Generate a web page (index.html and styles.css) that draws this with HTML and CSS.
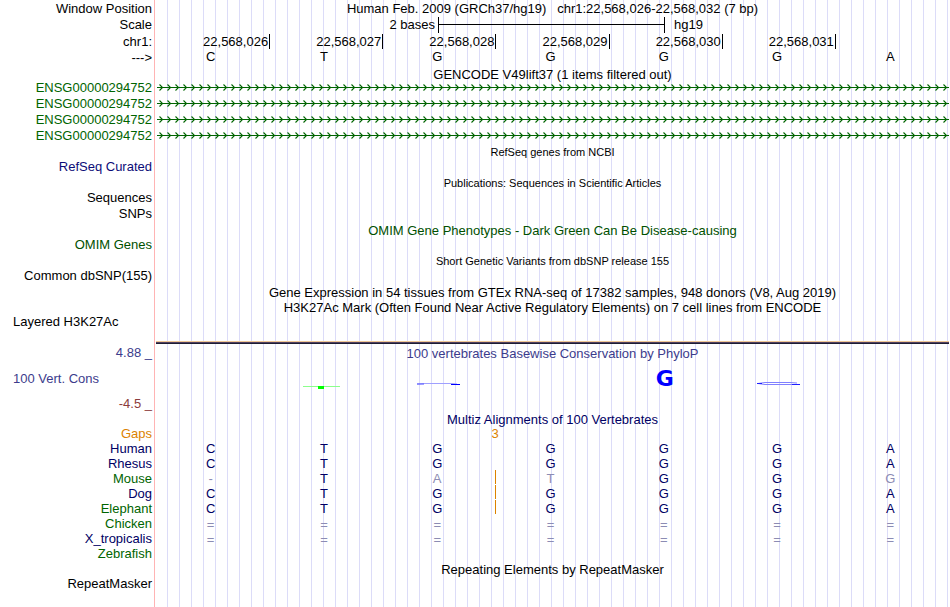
FILE: index.html
```html
<!DOCTYPE html>
<html lang="en">
<head>
    <meta charset="UTF-8">
    <meta name="viewport" content="width=device-width, initial-scale=1.0">
    <title>Human chr1:22,568,026-22,568,032</title>
    <link rel="stylesheet" href="styles.css">
</head>
<body>
    <div class="browser">
        <!-- Shared pattern for the intron arrows -->
        <svg class="defs" width="0" height="0" aria-hidden="true">
            <defs>
                <pattern id="arrows" width="8" height="16" patternUnits="userSpaceOnUse">
                    <path d="M0 7.5H8" stroke="#006400" fill="none"/>
                    <path d="M2.5 4.5L5.5 7.5L2.5 10.5" stroke="#006400" stroke-width="1.1" fill="none"/>
                </pattern>
            </defs>
        </svg>

        <!-- Position, scale and ruler -->
        <div class="row h17">
            <div class="label">Window Position</div>
            <div class="title">Human Feb. 2009 (GRCh37/hg19) &nbsp; chr1:22,568,026-22,568,032 (7 bp)</div>
        </div>
        <div class="row">
            <div class="label">Scale</div>
            <div class="scale">
                <span class="scale-size">2 bases</span>
                <span class="scale-bar"></span>
                <span class="scale-db">hg19</span>
            </div>
        </div>
        <div class="row h17">
            <div class="label">chr1:</div>
            <div class="ruler">
                <span>22,568,026</span>
                <span>22,568,027</span>
                <span>22,568,028</span>
                <span>22,568,029</span>
                <span>22,568,030</span>
                <span>22,568,031</span>
            </div>
        </div>
        <div class="row">
            <div class="label">---&gt;</div>
            <div class="bases">
                <span>C</span><span>T</span><span>G</span><span>G</span><span>G</span><span>G</span><span>A</span>
            </div>
        </div>

        <!-- GENCODE -->
        <div class="row h14"><div class="title tall">GENCODE V49lift37 (1 items filtered out)</div></div>
        <div class="row green">
            <div class="label">ENSG00000294752</div>
            <div class="gene"><svg width="100%" height="16"><rect width="100%" height="16" fill="url(#arrows)"/></svg></div>
        </div>
        <div class="row green">
            <div class="label">ENSG00000294752</div>
            <div class="gene"><svg width="100%" height="16"><rect width="100%" height="16" fill="url(#arrows)"/></svg></div>
        </div>
        <div class="row green">
            <div class="label">ENSG00000294752</div>
            <div class="gene"><svg width="100%" height="16"><rect width="100%" height="16" fill="url(#arrows)"/></svg></div>
        </div>
        <div class="row green">
            <div class="label">ENSG00000294752</div>
            <div class="gene"><svg width="100%" height="16"><rect width="100%" height="16" fill="url(#arrows)"/></svg></div>
        </div>

        <!-- Collapsed tracks -->
        <div class="row"><div class="title small">RefSeq genes from NCBI</div></div>
        <div class="row h15 refseq"><div class="label">RefSeq Curated</div></div>
        <div class="row"><div class="title small">Publications: Sequences in Scientific Articles</div></div>
        <div class="row h15"><div class="label">Sequences</div></div>
        <div class="row"><div class="label">SNPs</div></div>
        <div class="row omim"><div class="title tall">OMIM Gene Phenotypes - Dark Green Can Be Disease-causing</div></div>
        <div class="row h15 omim"><div class="label">OMIM Genes</div></div>
        <div class="row"><div class="title small">Short Genetic Variants from dbSNP release 155</div></div>
        <div class="row h15"><div class="label">Common dbSNP(155)</div></div>
        <div class="row"><div class="title tall">Gene Expression in 54 tissues from GTEx RNA-seq of 17382 samples, 948 donors (V8, Aug 2019)</div></div>
        <div class="row h15"><div class="title">H3K27Ac Mark (Often Found Near Active Regulatory Elements) on 7 cell lines from ENCODE</div></div>
        <div class="row h15"><div class="label label-left">Layered H3K27Ac</div></div>
        <div class="signal"></div>

        <!-- Conservation -->
        <div class="cons">
            <div class="cons-labels">
                <span class="label">4.88 _</span>
                <span class="label label-left">100 Vert. Cons</span>
                <span class="label low">-4.5 _</span>
            </div>
            <div class="cons-track">
                <div class="title">100 vertebrates Basewise Conservation by PhyloP</div>
                <div class="logo">
                    <span></span>
                    <span>
                        <svg width="44" height="8" viewBox="0 0 44 8">
                            <path d="M0 4.5H37" stroke="#8cff8c"/>
                            <path d="M15 4H21V7H15Z" fill="#00ff00"/>
                        </svg>
                    </span>
                    <span>
                        <svg width="44" height="8" viewBox="0 0 44 8">
                            <path d="M1 2L8 1.5H36L41 2" stroke="#a0a0ff" fill="none"/>
                            <path d="M1 2H8" stroke="#5050ff"/>
                            <path d="M35 2.5H44" stroke="#0000ff"/>
                        </svg>
                    </span>
                    <span></span>
                    <span class="logo-base">G</span>
                    <span>
                        <svg width="44" height="8" viewBox="0 0 44 8">
                            <path d="M41 1L34 .5H9L2 1.5L9 2.5H36" stroke="#8080ff" fill="none"/>
                            <path d="M1 1.5H6M36 2.5H44" stroke="#2020ff"/>
                        </svg>
                    </span>
                    <span></span>
                </div>
            </div>
        </div>

        <!-- Multiz alignment -->
        <div class="row h15 navy"><div class="title">Multiz Alignments of 100 Vertebrates</div></div>
        <table class="align">
            <colgroup>
                <col class="col-label"><col><col><col><col><col><col><col><col class="col-end">
            </colgroup>
            <tbody>
                <tr class="gaps"><th>Gaps</th><td></td><td></td><td><span class="gap-count">3</span></td><td></td><td></td><td></td><td></td><td></td></tr>
                <tr><th>Human</th><td>C</td><td>T</td><td>G</td><td>G</td><td>G</td><td>G</td><td>A</td><td></td></tr>
                <tr><th>Rhesus</th><td>C</td><td>T</td><td>G</td><td>G</td><td>G</td><td>G</td><td>A</td><td></td></tr>
                <tr><th class="green">Mouse</th><td class="diff">-</td><td>T</td><td class="diff gap">A</td><td class="diff">T</td><td>G</td><td>G</td><td class="diff">G</td><td></td></tr>
                <tr><th>Dog</th><td>C</td><td>T</td><td class="gap">G</td><td>G</td><td>G</td><td>G</td><td>A</td><td></td></tr>
                <tr><th class="green">Elephant</th><td>C</td><td>T</td><td class="gap">G</td><td>G</td><td>G</td><td>G</td><td>A</td><td></td></tr>
                <tr class="unaligned"><th class="green">Chicken</th><td>=</td><td>=</td><td>=</td><td>=</td><td>=</td><td>=</td><td>=</td><td></td></tr>
                <tr class="unaligned"><th>X_tropicalis</th><td>=</td><td>=</td><td>=</td><td>=</td><td>=</td><td>=</td><td>=</td><td></td></tr>
                <tr><th class="green">Zebrafish</th><td></td><td></td><td></td><td></td><td></td><td></td><td></td><td></td></tr>
            </tbody>
        </table>

        <!-- RepeatMasker -->
        <div class="row h15"><div class="title">Repeating Elements by RepeatMasker</div></div>
        <div class="row h15"><div class="label">RepeatMasker</div></div>
    </div>
</body>
</html>
```
FILE: styles.css
```css
* {
    box-sizing: border-box;
}

body {
    margin: 0;
    background: #ffffff;
    color: #000000;
    font-family: "Liberation Sans", Arial, Helvetica, sans-serif;
    font-size: 13px;
    line-height: 15px;
}

/* Red line beside the labels, blue guide lines every 12px after it */
.browser {
    min-height: 100vh;
    padding-right: 1px;
    background-image:
        linear-gradient(#ffb4b4, #ffb4b4),
        linear-gradient(#ffffff, #ffffff),
        linear-gradient(to right, #dcdcf8 1px, transparent 1px);
    background-position: 154px 0, 0 0, 11px 0;
    background-size: 1px 100%, 160px 100%, 12px 100%;
    background-repeat: no-repeat, no-repeat, repeat;
}

.defs {
    position: absolute;
}

.row {
    display: grid;
    grid-template-columns: 154px 1fr;
    height: 16px;
    line-height: 16px;
    white-space: nowrap;
}

.h14 {
    height: 14px;
    line-height: 14px;
}

.h15 {
    height: 15px;
    line-height: 15px;
}

.h17 {
    height: 17px;
    line-height: 17px;
}

.label {
    padding-right: 2px;
    text-align: right;
}

.h15 .label {
    line-height: 13px;
}

.label-left {
    padding-left: 13px;
    text-align: left;
}

.title {
    grid-column: 2;
    padding-left: 2px;
    text-align: center;
}

.tall {
    line-height: 17px;
}

.small {
    font-size: 11px;
}

/* Track colours */
.green {
    color: #006400;
}

.navy {
    color: #000064;
}

.refseq {
    color: #0c0c78;
}

.omim {
    color: #005000;
}

/* Scale bar covers two bases of the seven */
.scale {
    display: grid;
    grid-template-columns: 5fr 4fr 5fr;
}

.scale-size {
    padding-right: 3px;
    text-align: right;
}

.scale-bar {
    border: solid #000000;
    border-width: 0 1px;
    background: linear-gradient(#000000, #000000) 0 7px / 100% 1px no-repeat;
}

.scale-db {
    padding-left: 9px;
}

.ruler,
.bases,
.logo {
    display: grid;
    grid-template-columns: repeat(7, 1fr);
}

.ruler {
    padding: 1px 0 1px 3px;
    line-height: 15px;
}

.ruler span {
    padding-right: 1px;
    border-right: 1px solid #000000;
    text-align: right;
}

.bases {
    padding-right: 2px;
    line-height: 14px;
    text-align: center;
}

.gene {
    padding-left: 3px;
}

.gene svg {
    display: block;
}

.signal {
    height: 3px;
    margin: 11px 0 2px 156px;
    border-top: 1px solid #f0c896;
    background: linear-gradient(#504060 1px, #1e1e32 1px);
}

/* Conservation */
.cons {
    display: grid;
    grid-template-columns: 154px 1fr;
    height: 66px;
    color: #3c3c8c;
}

.cons-labels {
    display: flex;
    flex-direction: column;
    justify-content: space-between;
    padding-bottom: 2px;
}

.cons-labels .label {
    line-height: 13px;
}

.low {
    color: #8c3c3c;
}

.logo {
    padding: 0 1px;
    height: 40px;
    align-items: center;
    text-align: center;
}

.logo svg {
    display: block;
    margin: 10px auto 0;
}

.logo-base {
    height: 26px;
    color: #0000ff;
    font-family: "DejaVu Sans", sans-serif;
    font-size: 22px;
    font-weight: bold;
    line-height: 22px;
}

/* Alignment */
.align {
    width: 100%;
    border-collapse: collapse;
    table-layout: fixed;
    color: #000064;
    line-height: 13px;
}

.align th,
.align td {
    position: relative;
    height: 15px;
    padding: 0;
    text-align: center;
    vertical-align: top;
}

.align th {
    padding-right: 2px;
    font-weight: normal;
    text-align: right;
}

.align th.green {
    color: #006400;
}

.col-label {
    width: 154px;
}

.col-end {
    width: 2px;
}

.align .diff,
.align .unaligned td {
    color: #8c8cb4;
}

.align .unaligned td {
    line-height: 15px;
}

.gaps {
    color: #dc8200;
}

.gap-count {
    position: absolute;
    top: 0;
    right: -5px;
}

/* Insert marker between two bases */
.gap::after {
    content: "";
    position: absolute;
    top: -2px;
    right: -2px;
    width: 1px;
    height: 14px;
    background: #dc8200;
}
```
